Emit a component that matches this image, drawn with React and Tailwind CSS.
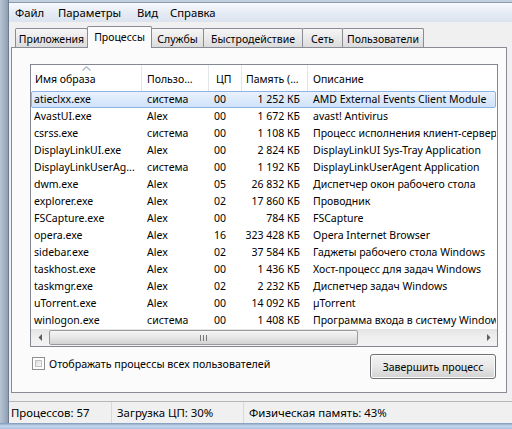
import React from "react";

const rows = [
  ["atieclxx.exe", "система", "00", "1 252 КБ", "AMD External Events Client Module"],
  ["AvastUI.exe", "Alex", "00", "1 672 КБ", "avast! Antivirus"],
  ["csrss.exe", "система", "00", "1 108 КБ", "Процесс исполнения клиент-сервер"],
  ["DisplayLinkUI.exe", "Alex", "00", "2 824 КБ", "DisplayLinkUI Sys-Tray Application"],
  ["DisplayLinkUserAg...", "система", "00", "1 192 КБ", "DisplayLinkUserAgent Application"],
  ["dwm.exe", "Alex", "05", "26 832 КБ", "Диспетчер окон рабочего стола"],
  ["explorer.exe", "Alex", "02", "17 860 КБ", "Проводник"],
  ["FSCapture.exe", "Alex", "00", "784 КБ", "FSCapture"],
  ["opera.exe", "Alex", "16", "323 428 КБ", "Opera Internet Browser"],
  ["sidebar.exe", "Alex", "02", "37 584 КБ", "Гаджеты рабочего стола Windows"],
  ["taskhost.exe", "Alex", "00", "1 436 КБ", "Хост-процесс для задач Windows"],
  ["taskmgr.exe", "Alex", "02", "2 232 КБ", "Диспетчер задач Windows"],
  ["uTorrent.exe", "Alex", "00", "14 092 КБ", "µTorrent"],
  ["winlogon.exe", "система", "00", "1 408 КБ", "Программа входа в систему Windows"],
];

const tabs = [
  { label: "Приложения", w: "w-[73px]" },
  { label: "Процессы", w: "w-[65px]", active: true },
  { label: "Службы", w: "w-[53px]" },
  { label: "Быстродействие", w: "w-[100px]" },
  { label: "Сеть", w: "w-[41px]" },
  { label: "Пользователи", w: "w-[82px]" },
];

function Tab({ label, w, active, first }) {
  if (active) {
    return (
      <div
        className={`${w} ${first ? "" : "-ml-px"} relative z-10 h-[22px] -mb-px border border-b-0 border-[#898c95] rounded-t-[2px] bg-[#fbfbfb] flex items-start justify-center pt-[3px]`}
      >
        {label}
      </div>
    );
  }
  return (
    <div
      className={`${w} ${first ? "" : "-ml-px"} h-[19px] border border-b-0 border-[#898c95] rounded-t-[2px] bg-gradient-to-b from-[#f6f6f6] via-[#e9e9e9] to-[#dcdcdc] flex items-center justify-center pt-[1px]`}
    >
      {label}
    </div>
  );
}

function SortArrow() {
  return (
    <svg
      width="9"
      height="5"
      viewBox="0 0 9 5"
      className="absolute left-[51px] top-[1px]"
    >
      <path d="M0.5 4.5 L4.5 0.8 L8.5 4.5" fill="none" stroke="#a4b2c4" strokeWidth="1.2" />
    </svg>
  );
}

function Row({ r, selected }) {
  return (
    <div
      className={`flex h-[17px] items-center whitespace-nowrap leading-[15px] ${
        selected
          ? "border border-[#8db2e3] rounded-[2px] bg-gradient-to-b from-[#eaf2fc] to-[#cfe2f9] mr-px"
          : "border border-transparent"
      }`}
    >
      <div className="w-[110px] pl-[2px] overflow-hidden">{r[0]}</div>
      <div className="w-[67px] pl-[5px] overflow-hidden">{r[1]}</div>
      <div className="w-[33px] pl-[5px]">{r[2]}</div>
      <div className="w-[66px] pr-[8px] text-right">{r[3]}</div>
      <div className="flex-1 pl-[5px] overflow-hidden">{r[4]}</div>
    </div>
  );
}

function ScrollBar() {
  return (
    <div className="flex h-[17px] bg-gradient-to-b from-[#e4e4e4] via-[#efefef] to-[#f2f2f2]">
      <div className="w-[17px] flex items-center justify-center">
        <svg width="4" height="7" viewBox="0 0 4 7">
          <path d="M4 0 L0.5 3.5 L4 7 Z" fill="#5c5c5c" />
        </svg>
      </div>
      <div className="w-[309px] ml-[1px] my-[1px] rounded-[2px] border border-[#9b9b9b] bg-gradient-to-b from-[#f5f5f5] via-[#e6e6e6] to-[#d3d3d3] flex items-center justify-center gap-[2px]">
        <div className="w-px h-[6px] bg-[#7a7a7a]" />
        <div className="w-px h-[6px] bg-[#7a7a7a]" />
        <div className="w-px h-[6px] bg-[#7a7a7a]" />
      </div>
      <div className="flex-1" />
      <div className="w-[17px] flex items-center justify-center">
        <svg width="4" height="7" viewBox="0 0 4 7">
          <path d="M0 0 L3.5 3.5 L0 7 Z" fill="#5c5c5c" />
        </svg>
      </div>
    </div>
  );
}

export default function App() {
  return (
    <div className="w-[512px] h-[429px] overflow-hidden flex flex-col bg-[#f0f0f0] text-[10.5px] leading-[14px] text-[#000] font-['Noto_Sans',sans-serif]">
      <div className="flex flex-1 min-h-0">
        <div className="w-[9px] bg-gradient-to-r from-[#b7c4d3] via-[#a3b2c4] to-[#8e9db0] border-r border-[#6d7c8f]" />
        <div className="flex-1 flex flex-col min-w-0">
          <div className="h-[3px] bg-[#c3cfdc] border-b border-[#8c9cb0]" />
          <div className="h-[19px] flex items-center pl-[6px] text-[11.3px] bg-gradient-to-b from-[#f7f9fc] via-[#e6ecf5] to-[#dbe3ef]">
            <span className="w-[43px]">Файл</span>
            <span className="w-[79px]">Параметры</span>
            <span className="w-[33px]">Вид</span>
            <span>Справка</span>
          </div>
          <div className="h-[25px] flex items-end pl-[6px]">
            {tabs.map((t, i) => (
              <Tab key={t.label} {...t} first={i === 0} />
            ))}
          </div>
          <div className="ml-[2px] w-[496px] h-[346px] border border-[#898c95] bg-[#fbfbfb] pl-[18px] pt-[16px]">
            <div className="w-[468px] h-[283px] border border-[#828790] bg-white flex flex-col">
              <div className="flex h-[26px] items-center whitespace-nowrap">
                <div className="relative w-[111px] h-full border-r border-[#e2e5e9] pl-[4px] flex items-center pt-[1px]">
                  Имя образа
                  <SortArrow />
                </div>
                <div className="w-[67px] h-full border-r border-[#e2e5e9] pl-[5px] flex items-center pt-[1px]">Пользо...</div>
                <div className="w-[33px] h-full border-r border-[#e2e5e9] pl-[7px] flex items-center pt-[1px]">ЦП</div>
                <div className="w-[66px] h-full border-r border-[#e2e5e9] pl-[4px] flex items-center pt-[1px]">Память (...</div>
                <div className="flex-1 h-full pl-[5px] flex items-center pt-[1px]">Описание</div>
              </div>
              <div className="flex flex-col">
                {rows.map((r, i) => (
                  <Row key={r[0]} r={r} selected={i === 0} />
                ))}
              </div>
              <ScrollBar />
            </div>
            <div className="w-[468px] flex justify-between mt-[7px]">
              <div className="flex items-center gap-[4px] ml-[2px] mt-[3px] h-[13px] text-[10.7px]">
                <div className="w-[13px] h-[13px] border border-[#8f8f8f] bg-white p-[2px]">
                  <div className="w-full h-full border border-[#c2c2c2] bg-gradient-to-br from-[#dcdcdc] to-[#f8f8f8]" />
                </div>
                <span>Отображать процессы всех пользователей</span>
              </div>
              <div className="w-[126px] h-[25px] mr-[2px] rounded-[3px] border border-[#707070] bg-gradient-to-b from-[#f4f4f4] via-[#e8e8e8] to-[#d2d2d2] flex items-center justify-center shadow-[inset_0_0_0_1px_#fbfbfb]">
                Завершить процесс
              </div>
            </div>
          </div>
          <div className="mt-[8px] border-t border-[#b7b7b7] h-[22px] flex items-center whitespace-nowrap text-[11.4px]">
            <div className="w-[102px] pl-[2px]">Процессов: 57</div>
            <div className="w-[132px] h-full border-l border-[#d9d9d9] pl-[5px] flex items-center">Загрузка ЦП: 30%</div>
            <div className="flex-1 h-full border-l border-[#d9d9d9] pl-[5px] flex items-center">Физическая память: 43%</div>
          </div>
        </div>
      </div>
      <div className="h-[6px] bg-gradient-to-b from-[#7f99ba] via-[#c6d8ee] to-[#a9c2e1]" />
    </div>
  );
}
